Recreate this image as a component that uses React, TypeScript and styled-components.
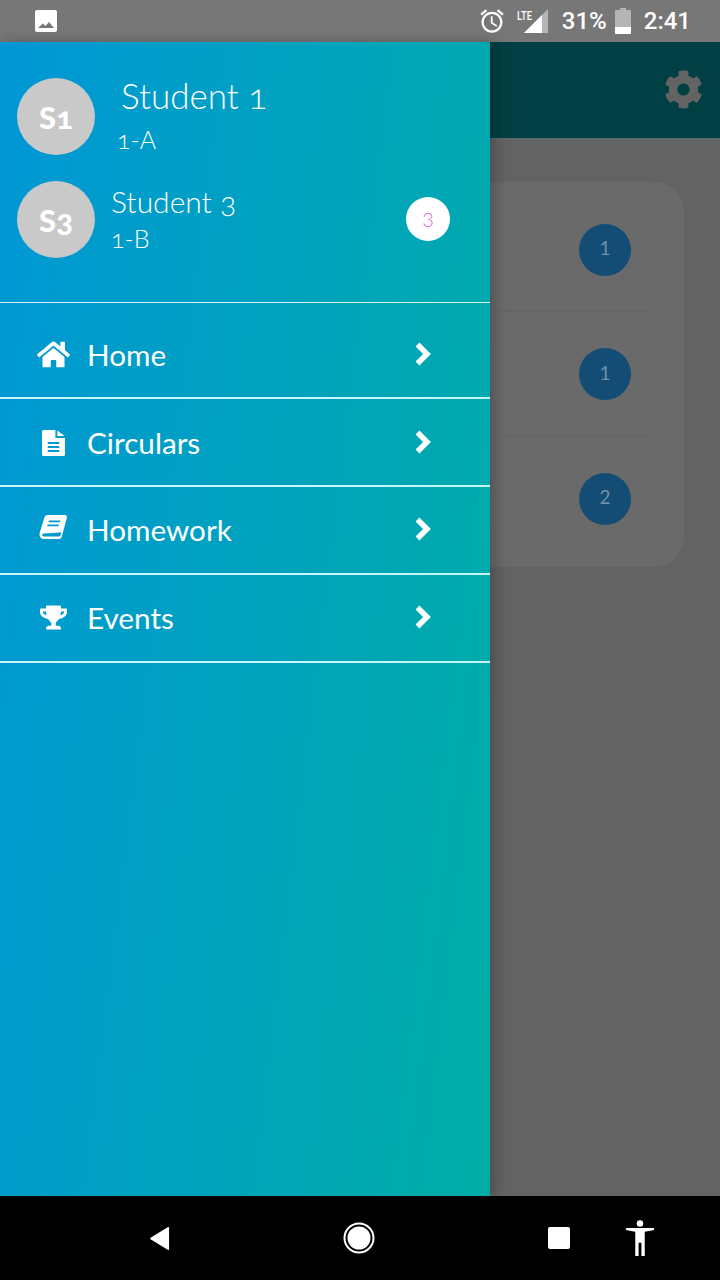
import React from 'react';
import styled, { createGlobalStyle } from 'styled-components';
import { FaHome, FaTrophy, FaCog } from 'react-icons/fa';

const GlobalStyle = createGlobalStyle`
  html, body {
    margin: 0;
    padding: 0;
    background: #000;
  }
  * {
    box-sizing: border-box;
  }
`;

const Screen = styled.div`
  width: 720px;
  height: 1280px;
  display: flex;
  flex-direction: column;
  overflow: hidden;
  font-family: Lato, 'Liberation Sans', sans-serif;
  color: #fff;
`;

const StatusBar = styled.div`
  height: 42px;
  flex: none;
  background: #777;
  display: flex;
  align-items: center;
  padding: 0 29px 0 34px;
`;

const StatusRight = styled.div`
  margin-left: auto;
  display: flex;
  align-items: center;
`;

const StatusText = styled.span<{ $left: number }>`
  font-family: Roboto, sans-serif;
  font-size: 24px;
  font-weight: 500;
  margin-left: ${({ $left }) => $left}px;
`;

const Body = styled.div`
  flex: 1;
  display: flex;
  min-height: 0;
`;

const Drawer = styled.nav`
  width: 490px;
  flex: none;
  background: linear-gradient(97deg, #0097d6 0%, #00ada6 100%);
  display: flex;
  flex-direction: column;
  position: relative;
  box-shadow: 4px 0 14px rgba(0, 0, 0, 0.25);
  z-index: 1;
`;

const Students = styled.div`
  height: 261px;
  flex: none;
  padding: 36px 40px 0 17px;
  border-bottom: 1px solid #d8f4f6;
  display: flex;
  flex-direction: column;
  gap: 26px;
`;

const StudentRow = styled.div`
  height: 77px;
  display: flex;
  align-items: center;
`;

const Avatar = styled.div`
  width: 78px;
  height: 77px;
  flex: none;
  border-radius: 50%;
  background: #c9c9c9;
  display: flex;
  align-items: center;
  justify-content: center;
  font-size: 31px;
  font-weight: 900;
  color: #fff;
  font-variant-numeric: oldstyle-nums;
`;

const StudentInfo = styled.div<{ $first?: boolean }>`
  margin-left: ${({ $first }) => ($first ? 22 : 16)}px;
  padding-bottom: ${({ $first }) => ($first ? 6 : 4)}px;
  display: flex;
  flex-direction: column;
  gap: ${({ $first }) => ($first ? 10 : 6)}px;
  font-variant-numeric: oldstyle-nums;
`;

const StudentName = styled.div<{ $first?: boolean }>`
  font-size: ${({ $first }) => ($first ? 35 : 30)}px;
  line-height: ${({ $first }) => ($first ? 40 : 34)}px;
  font-weight: 300;
  margin-left: ${({ $first }) => ($first ? 4 : 0)}px;
`;

const StudentClass = styled.div`
  font-size: 25px;
  line-height: 28px;
  font-weight: 300;
`;

const CountBadge = styled.div`
  margin-left: auto;
  margin-top: -2px;
  width: 44px;
  height: 44px;
  border-radius: 50%;
  background: #fff;
  color: #d774c4;
  font-size: 20px;
  font-weight: 300;
  display: flex;
  align-items: center;
  justify-content: center;
`;

const MenuList = styled.div`
  display: flex;
  flex-direction: column;
`;

const MenuRow = styled.div<{ $height: number; $top: number; $bottom: number }>`
  height: ${({ $height }) => $height}px;
  border-bottom: 2px solid #c8f6f8;
  display: flex;
  align-items: center;
  padding: ${({ $top, $bottom }) => `${$top}px 58px ${$bottom}px 36px`};
`;

const MenuIcon = styled.span<{ $dy: number }>`
  width: 34px;
  flex: none;
  display: flex;
  justify-content: center;
  margin-top: ${({ $dy }) => $dy}px;
`;

const MenuLabel = styled.span`
  margin-left: 17px;
  font-size: 29.7px;
  font-weight: 400;
  margin-top: 1px;
`;

const Chevron = styled.span`
  margin-left: auto;
  display: flex;
  margin-top: -1px;
`;

const Backdrop = styled.div`
  flex: 1;
  display: flex;
  flex-direction: column;
  background: #636363;
`;

const Header = styled.div`
  height: 98px;
  flex: none;
  background: #003f43;
  display: flex;
  align-items: center;
  justify-content: flex-end;
  padding: 0 17px 2px 0;
  border-bottom: 2px solid #5e6868;
`;

const Panel = styled.div`
  width: 194px;
  height: 385px;
  margin-top: 42px;
  padding-top: 5.5px;
  background: #6a6a6a;
  border-radius: 0 30px 30px 0;
  display: flex;
  flex-direction: column;
`;

const PanelRow = styled.div<{ $line?: boolean }>`
  height: 124.5px;
  width: 158px;
  padding: 36px 0 0 89px;
  border-bottom: ${({ $line }) => ($line ? '1px solid #656565' : 'none')};
`;

const RoundCount = styled.div`
  width: 52px;
  height: 52px;
  padding-bottom: 4px;
  border-radius: 50%;
  background: #134d75;
  color: #6f90a8;
  font-size: 19px;
  font-weight: 400;
  display: flex;
  align-items: center;
  justify-content: center;
`;

const NavBar = styled.div`
  height: 84px;
  flex: none;
  background: #000;
  display: flex;
  align-items: center;
  padding: 0 65px 0 150px;
`;

const NavSlot = styled.span<{ $left: number }>`
  display: flex;
  margin-left: ${({ $left }) => $left}px;
`;

const PictureIcon = () => (
  <svg width="24" height="24" viewBox="0 0 24 24">
    <path
      fill="#fff"
      d="M3 1h18a2 2 0 0 1 2 2v18a2 2 0 0 1-2 2H3a2 2 0 0 1-2-2V3a2 2 0 0 1 2-2zM4 19h16l-5-6-3.500 4-2.500-2.500z"
      fillRule="evenodd"
    />
  </svg>
);

const AlarmIcon = () => (
  <svg width="28" height="28" viewBox="0 0 24 24">
    <path
      fill="#fff"
      d="M22 5.720l-4.600-3.860-1.290 1.530 4.600 3.860L22 5.720zM7.880 3.390L6.600 1.860 2 5.710l1.290 1.530 4.590-3.850zM12.500 8H11v6l4.750 2.850.75-1.230-4-2.370V8zM12 4c-4.970 0-9 4.030-9 9s4.030 9 9 9 9-4.030 9-9-4.030-9-9-9zm0 16c-3.870 0-7-3.130-7-7s3.130-7 7-7 7 3.130 7 7-3.130 7-7 7z"
    />
  </svg>
);

const SignalIcon = () => (
  <svg width="32" height="28" viewBox="0 0 32 28">
    <path fill="#b5b5b5" d="M32 2v24H8z" />
    <path fill="#fff" d="M26 8v18H8z" />
    <text
      x="1"
      y="12.500"
      fill="#fff"
      fontFamily="Roboto, sans-serif"
      fontSize="13"
      fontWeight="500"
      textLength="15"
      lengthAdjust="spacingAndGlyphs"
    >
      LTE
    </text>
  </svg>
);

const BatteryIcon = () => (
  <svg width="16" height="26" viewBox="0 0 16 26">
    <path fill="#b5b5b5" d="M5 0h6v2h4a1 1 0 0 1 1 1v22a1 1 0 0 1-1 1H1a1 1 0 0 1-1-1V3a1 1 0 0 1 1-1h4z" />
    <path fill="#fff" d="M0 19h16v6a1 1 0 0 1-1 1H1a1 1 0 0 1-1-1z" />
  </svg>
);

const FileIcon = () => (
  <svg width="23" height="26" viewBox="0 0 24 26" preserveAspectRatio="none">
    <path
      fill="#fff"
      fillRule="evenodd"
      d="M1.500 0H14v8h10v16.500a1.500 1.500 0 0 1-1.500 1.500h-21A1.500 1.500 0 0 1 0 24.500v-23A1.500 1.500 0 0 1 1.500 0zM6 12v2h12v-2zM6 16v2h12v-2zM6 20v2h12v-2z"
    />
    <path fill="#fff" d="M16 0.500L23.500 6H16z" />
  </svg>
);

const BookIcon = () => (
  <svg width="28" height="26" viewBox="0 0 28 26">
    <path
      fill="#fff"
      fillRule="evenodd"
      d="M9 0h17a2 2 0 0 1 1.900 2.600l-5 18.600A3.400 3.400 0 0 1 20 24H5a4.400 4.400 0 0 1-4.500-4.600c0-.7.1-1.200.3-1.900L5.400 2.400C5.800 1 7.200 0 9 0zM10 5.500l-.5 1.700h11.400l.5-1.700zM8.600 9.500l-.5 1.700h11.400l.5-1.700zM5.400 18.400c-1.400 0-2.200.6-2.200 1.500 0 .9.8 1.500 2.100 1.500h14.900c.6 0 1-.3 1.200-.8l1.100-3.800c-.3.4-.8.6-1.400.6z"
    />
  </svg>
);

const ChevronIcon = () => (
  <svg width="18" height="24" viewBox="0 0 18 24">
    <path fill="none" stroke="#fff" strokeWidth="5.500" strokeLinejoin="miter" d="M3.500 2.500L13 12l-9.500 9.500" />
  </svg>
);

const BackIcon = () => (
  <svg width="21" height="25" viewBox="0 0 22 26">
    <path fill="#fff" d="M21 1.500v23a1 1 0 0 1-1.500.8L1 14a1.200 1.200 0 0 1 0-2L19.500.7A1 1 0 0 1 21 1.500z" />
  </svg>
);

const HomeButton = () => (
  <svg width="32" height="32" viewBox="0 0 32 32">
    <circle cx="16" cy="16" r="14.500" fill="none" stroke="#fff" strokeWidth="2" />
    <circle cx="16" cy="16" r="11.500" fill="#fff" />
  </svg>
);

const SquareIcon = () => (
  <svg width="22" height="22" viewBox="0 0 22 22">
    <rect width="22" height="22" rx="2" fill="#fff" />
  </svg>
);

const AccessIcon = () => (
  <svg width="30" height="36" viewBox="0 0 30 38">
    <circle cx="15" cy="3.600" r="3.400" fill="#fff" />
    <path
      fill="#fff"
      d="M1 8.500h28c.7 0 1 .4 1 1s-.4 1-1 1.200L20 12.500V38h-3.500V24h-3V38H10V12.500L1 10.700c-.6-.2-1-.6-1-1.200s.3-1 1-1z"
    />
  </svg>
);

const menu = [
  { label: 'Home', height: 96, top: 8, bottom: 0, dy: 0, icon: <FaHome size={33} color="#fff" /> },
  { label: 'Circulars', height: 88, top: 0, bottom: 0, dy: 2, icon: <FileIcon /> },
  { label: 'Homework', height: 88, top: 0, bottom: 2, dy: -2, icon: <BookIcon /> },
  { label: 'Events', height: 88, top: 0, bottom: 2, dy: 1, icon: <FaTrophy size={27} color="#fff" /> },
];

const App: React.FC = () => {
  return (
    <Screen>
      <GlobalStyle />
      <StatusBar>
        <PictureIcon />
        <StatusRight>
          <AlarmIcon />
          <NavSlot $left={10}>
            <SignalIcon />
          </NavSlot>
          <StatusText $left={14}>31%</StatusText>
          <NavSlot $left={8}>
            <BatteryIcon />
          </NavSlot>
          <StatusText $left={13}>2:41</StatusText>
        </StatusRight>
      </StatusBar>
      <Body>
        <Drawer>
          <Students>
            <StudentRow>
              <Avatar>S1</Avatar>
              <StudentInfo $first>
                <StudentName $first>Student 1</StudentName>
                <StudentClass>1-A</StudentClass>
              </StudentInfo>
            </StudentRow>
            <StudentRow>
              <Avatar>S3</Avatar>
              <StudentInfo>
                <StudentName>Student 3</StudentName>
                <StudentClass>1-B</StudentClass>
              </StudentInfo>
              <CountBadge>3</CountBadge>
            </StudentRow>
          </Students>
          <MenuList>
            {menu.map((item) => (
              <MenuRow key={item.label} $height={item.height} $top={item.top} $bottom={item.bottom}>
                <MenuIcon $dy={item.dy}>{item.icon}</MenuIcon>
                <MenuLabel>{item.label}</MenuLabel>
                <Chevron>
                  <ChevronIcon />
                </Chevron>
              </MenuRow>
            ))}
          </MenuList>
        </Drawer>
        <Backdrop>
          <Header>
            <FaCog size={39} color="#636363" />
          </Header>
          <Panel>
            <PanelRow $line>
              <RoundCount>1</RoundCount>
            </PanelRow>
            <PanelRow $line>
              <RoundCount>1</RoundCount>
            </PanelRow>
            <PanelRow>
              <RoundCount>2</RoundCount>
            </PanelRow>
          </Panel>
        </Backdrop>
      </Body>
      <NavBar>
        <BackIcon />
        <NavSlot $left={173}>
          <HomeButton />
        </NavSlot>
        <NavSlot $left={173}>
          <SquareIcon />
        </NavSlot>
        <NavSlot $left={55}>
          <AccessIcon />
        </NavSlot>
      </NavBar>
    </Screen>
  );
};

export default App;
